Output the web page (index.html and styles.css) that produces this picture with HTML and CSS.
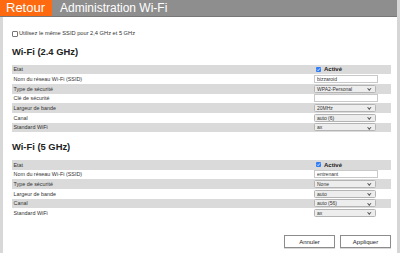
FILE: index.html
```html
<!DOCTYPE html>
<html lang="fr">
<head>
    <meta charset="UTF-8">
    <title>Administration Wi-Fi</title>
    <link rel="stylesheet" href="styles.css">
</head>
<body>
    <div class="window">
        <div class="main">
            <div class="header">
                <a class="back">Retour</a>
                <span class="title">Administration Wi-Fi</span>
            </div>
            <div class="content">
                <label class="same-ssid"><span class="box"></span>Utilisez le même SSID pour 2,4 GHz et 5 GHz</label>

                <h2 class="section-title">Wi-Fi (2.4 GHz)</h2>
                <table class="settings">
                    <tr><td>Etat</td><td><span class="box checked"><svg viewBox="0 0 10 10"><path d="M2 5.2 L4.2 7.4 L8 2.8" /></svg></span><b>Activé</b></td></tr>
                    <tr><td>Nom du réseau Wi-Fi (SSID)</td><td><input class="input-field" type="text" value="bizzaroid"></td></tr>
                    <tr><td>Type de sécurité</td><td><span class="select">WPA2-Personal</span></td></tr>
                    <tr><td>Clé de sécurité</td><td><input class="input-field" type="password" value=""></td></tr>
                    <tr><td>Largeur de bande</td><td><span class="select">20MHz</span></td></tr>
                    <tr><td>Canal</td><td><span class="select">auto (6)</span></td></tr>
                    <tr><td>Standard WiFi</td><td><span class="select">ax</span></td></tr>
                </table>

                <h2 class="section-title">Wi-Fi (5 GHz)</h2>
                <table class="settings">
                    <tr><td>Etat</td><td><span class="box checked"><svg viewBox="0 0 10 10"><path d="M2 5.2 L4.2 7.4 L8 2.8" /></svg></span><b>Activé</b></td></tr>
                    <tr><td>Nom du réseau Wi-Fi (SSID)</td><td><input class="input-field" type="text" value="entrenant"></td></tr>
                    <tr><td>Type de sécurité</td><td><span class="select">None</span></td></tr>
                    <tr><td>Largeur de bande</td><td><span class="select">auto</span></td></tr>
                    <tr><td>Canal</td><td><span class="select">auto (56)</span></td></tr>
                    <tr><td>Standard WiFi</td><td><span class="select">ax</span></td></tr>
                </table>

                <div class="actions">
                    <button class="btn">Annuler</button>
                    <button class="btn">Appliquer</button>
                </div>
            </div>
        </div>
        <div class="scrollbar"></div>
    </div>
</body>
</html>
```

FILE: styles.css
```css
body {
    margin: 0;
    font-family: "Liberation Sans", Arial, sans-serif;
    background-color: #fff;
    color: #222;
}

.window {
    display: flex;
    height: 253px;
}

.main {
    flex: 1;
    display: flex;
    flex-direction: column;
}

.scrollbar {
    width: 3px;
    background-color: #d6d6d6;
}

.header {
    display: flex;
    align-items: center;
    height: 16px;
    background-color: #8e8e8e;
    border-bottom: 1px solid #777;
}

.back {
    height: 100%;
    width: 52px;
    box-sizing: border-box;
    padding-left: 6px;
    background-color: #ff6a10;
    color: #fff;
    font-size: 13px;
    line-height: 16px;
}

.title {
    color: #fff;
    font-size: 12px;
    padding-left: 8px;
    line-height: 16px;
}

.content {
    flex: 1;
    border-left: 3px solid #d8d8d8;
    padding: 0 6px 0 9px;
}

.same-ssid {
    display: flex;
    align-items: center;
    margin: 13px 0 3px 0;
    font-size: 5.7px;
    line-height: 7px;
    color: #333;
}

.box {
    display: inline-block;
    width: 4px;
    height: 4px;
    border: 0.6px solid #777;
    border-radius: 1px;
    background-color: #fff;
    margin-right: 1px;
}

.box.checked {
    width: 5px;
    height: 5px;
    border: none;
    background-color: #2f7cf6;
    margin: 0 3px 0 2px;
    vertical-align: -0.5px;
}

.box svg {
    display: block;
    width: 5px;
    height: 5px;
    fill: none;
    stroke: #fff;
    stroke-width: 1.6;
}

.section-title {
    font-size: 9.4px;
    margin: 8.5px 0 7px 0;
    line-height: 12px;
}

.settings {
    width: 100%;
    border-collapse: collapse;
    font-size: 5.4px;
    color: #333;
}

.settings tr {
    height: 9.7px;
}

.settings tr:nth-child(odd) {
    background-color: #dadada;
}

.settings td {
    padding: 0 0 0 1.5px;
    line-height: 8px;
}

.settings td:last-child {
    width: 77px;
    padding: 0;
}

.settings b {
    font-size: 6px;
    color: #222;
}

.input-field {
    display: block;
    box-sizing: border-box;
    width: 64px;
    height: 8px;
    margin: 0;
    padding: 0 2px;
    border: 1px solid #c9c9c9;
    background-color: #fff;
    font-family: inherit;
    font-size: 5px;
    color: #333;
}

.select {
    position: relative;
    display: block;
    box-sizing: border-box;
    width: 62px;
    height: 8px;
    padding-left: 2px;
    border: 1px solid #b4b4b4;
    border-radius: 1.5px;
    background-color: #ededed;
    font-size: 5px;
    line-height: 6px;
    color: #333;
}

.select::after {
    content: "";
    position: absolute;
    right: 4px;
    top: 1.3px;
    width: 1.6px;
    height: 1.6px;
    border-right: 0.7px solid #555;
    border-bottom: 0.7px solid #555;
    transform: rotate(45deg);
}

.actions {
    display: flex;
    justify-content: flex-end;
    gap: 5px;
    margin-top: 17.5px;
}

.btn {
    width: 51px;
    height: 13px;
    padding: 0;
    border: 1px solid #8c8c8c;
    background-color: #fff;
    font-family: inherit;
    font-size: 6px;
    color: #222;
    box-shadow: 0 0.5px 0.5px rgba(0, 0, 0, 0.15);
}
```
